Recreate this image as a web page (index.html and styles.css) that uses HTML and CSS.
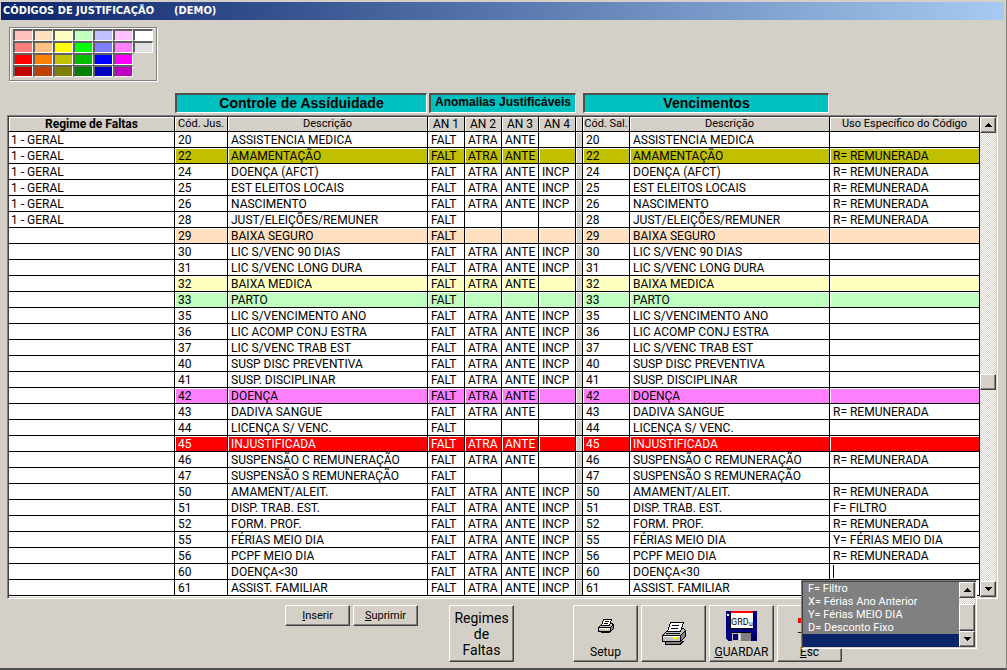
FILE: index.html
```html
<!DOCTYPE html>
<html lang="pt">
<head>
<meta charset="utf-8">
<title>Códigos de Justificação</title>
<link rel="stylesheet" href="styles.css">
</head>
<body>
<main class="window">
<h1 class="titlebar"><span>CÓDIGOS DE JUSTIFICAÇÃO</span><span>(DEMO)</span></h1>

<div class="palette" role="group" aria-label="Cores">
<button class="sw c1" aria-label="Rosa claro"></button><button class="sw c2" aria-label="Pêssego"></button><button class="sw c3" aria-label="Creme"></button><button class="sw c4" aria-label="Verde claro"></button><button class="sw c5" aria-label="Azul claro"></button><button class="sw c6" aria-label="Lilás claro"></button><button class="sw c7" aria-label="Branco"></button>
<button class="sw c8" aria-label="Salmão"></button><button class="sw c9" aria-label="Laranja claro"></button><button class="sw c10" aria-label="Amarelo"></button><button class="sw c11" aria-label="Verde"></button><button class="sw c12" aria-label="Azul médio"></button><button class="sw c13" aria-label="Lilás"></button><button class="sw c14" aria-label="Cinza"></button>
<button class="sw c15 first" aria-label="Vermelho"></button><button class="sw c16" aria-label="Laranja"></button><button class="sw c17" aria-label="Mostarda"></button><button class="sw c18" aria-label="Verde médio"></button><button class="sw c19" aria-label="Azul"></button><button class="sw c20" aria-label="Magenta"></button>
<button class="sw c21 first" aria-label="Vermelho escuro"></button><button class="sw c22" aria-label="Castanho"></button><button class="sw c23" aria-label="Oliva"></button><button class="sw c24" aria-label="Verde escuro"></button><button class="sw c25" aria-label="Azul escuro"></button><button class="sw c26" aria-label="Púrpura"></button>
</div>

<div class="groups">
<h2 class="group attendance">Controle de Assíduidade</h2>
<h2 class="group anomalies">Anomalias Justificáveis</h2>
<h2 class="group salary">Vencimentos</h2>
</div>

<div class="grid">
<table class="codes">
<colgroup><col class="w-regime"><col class="w-code"><col><col class="w-an"><col class="w-an"><col class="w-an"><col class="w-an"><col class="w-gap"><col class="w-sal"><col><col class="w-use"></colgroup>
<thead>
<tr><th class="strong">Regime de Faltas<th>Cód. Jus.<th>Descrição<th class="an">AN 1<th class="an">AN 2<th class="an">AN 3<th class="an">AN 4<th><th>Cód. Sal.<th>Descrição<th>Uso Específico do Código
</thead>
<tbody>
<tr><td>1 - GERAL<td>20<td>ASSISTENCIA MEDICA<td>FALT<td>ATRA<td>ANTE<td><td><td>20<td>ASSISTENCIA MEDICA<td>
<tr class="olive"><td>1 - GERAL<td>22<td>AMAMENTAÇÃO<td>FALT<td>ATRA<td>ANTE<td><td><td>22<td>AMAMENTAÇÃO<td>R= REMUNERADA
<tr><td>1 - GERAL<td>24<td>DOENÇA (AFCT)<td>FALT<td>ATRA<td>ANTE<td>INCP<td><td>24<td>DOENÇA (AFCT)<td>R= REMUNERADA
<tr><td>1 - GERAL<td>25<td>EST ELEITOS LOCAIS<td>FALT<td>ATRA<td>ANTE<td>INCP<td><td>25<td>EST ELEITOS LOCAIS<td>R= REMUNERADA
<tr><td>1 - GERAL<td>26<td>NASCIMENTO<td>FALT<td>ATRA<td>ANTE<td>INCP<td><td>26<td>NASCIMENTO<td>R= REMUNERADA
<tr><td>1 - GERAL<td>28<td>JUST/ELEIÇÕES/REMUNER<td>FALT<td><td><td><td><td>28<td>JUST/ELEIÇÕES/REMUNER<td>R= REMUNERADA
<tr class="peach"><td><td>29<td>BAIXA SEGURO<td>FALT<td><td><td><td><td>29<td>BAIXA SEGURO<td>
<tr><td><td>30<td>LIC S/VENC 90 DIAS<td>FALT<td>ATRA<td>ANTE<td>INCP<td><td>30<td>LIC S/VENC 90 DIAS<td>
<tr><td><td>31<td>LIC S/VENC LONG DURA<td>FALT<td>ATRA<td>ANTE<td>INCP<td><td>31<td>LIC S/VENC LONG DURA<td>
<tr class="cream"><td><td>32<td>BAIXA MEDICA<td>FALT<td>ATRA<td>ANTE<td><td><td>32<td>BAIXA MEDICA<td>
<tr class="mint"><td><td>33<td>PARTO<td>FALT<td><td><td><td><td>33<td>PARTO<td>
<tr><td><td>35<td>LIC S/VENCIMENTO ANO<td>FALT<td>ATRA<td>ANTE<td>INCP<td><td>35<td>LIC S/VENCIMENTO ANO<td>
<tr><td><td>36<td>LIC ACOMP CONJ ESTRA<td>FALT<td>ATRA<td>ANTE<td>INCP<td><td>36<td>LIC ACOMP CONJ ESTRA<td>
<tr><td><td>37<td>LIC S/VENC TRAB EST<td>FALT<td>ATRA<td>ANTE<td>INCP<td><td>37<td>LIC S/VENC TRAB EST<td>
<tr><td><td>40<td>SUSP DISC PREVENTIVA<td>FALT<td>ATRA<td>ANTE<td>INCP<td><td>40<td>SUSP DISC PREVENTIVA<td>
<tr><td><td>41<td>SUSP. DISCIPLINAR<td>FALT<td>ATRA<td>ANTE<td>INCP<td><td>41<td>SUSP. DISCIPLINAR<td>
<tr class="pink"><td><td>42<td>DOENÇA<td>FALT<td>ATRA<td>ANTE<td><td><td>42<td>DOENÇA<td>
<tr><td><td>43<td>DADIVA SANGUE<td>FALT<td>ATRA<td>ANTE<td><td><td>43<td>DADIVA SANGUE<td>R= REMUNERADA
<tr><td><td>44<td>LICENÇA S/ VENC.<td>FALT<td><td><td><td><td>44<td>LICENÇA S/ VENC.<td>
<tr class="red"><td><td>45<td>INJUSTIFICADA<td>FALT<td>ATRA<td>ANTE<td><td><td>45<td>INJUSTIFICADA<td>
<tr><td><td>46<td>SUSPENSÃO C REMUNERAÇÃO<td>FALT<td>ATRA<td>ANTE<td><td><td>46<td>SUSPENSÃO C REMUNERAÇÃO<td>R= REMUNERADA
<tr><td><td>47<td>SUSPENSÃO S REMUNERAÇÃO<td>FALT<td><td><td><td><td>47<td>SUSPENSÃO S REMUNERAÇÃO<td>
<tr><td><td>50<td>AMAMENT/ALEIT.<td>FALT<td>ATRA<td>ANTE<td>INCP<td><td>50<td>AMAMENT/ALEIT.<td>R= REMUNERADA
<tr><td><td>51<td>DISP. TRAB. EST.<td>FALT<td>ATRA<td>ANTE<td>INCP<td><td>51<td>DISP. TRAB. EST.<td>F= FILTRO
<tr><td><td>52<td>FORM. PROF.<td>FALT<td>ATRA<td>ANTE<td>INCP<td><td>52<td>FORM. PROF.<td>R= REMUNERADA
<tr><td><td>55<td>FÉRIAS MEIO DIA<td>FALT<td>ATRA<td>ANTE<td>INCP<td><td>55<td>FÉRIAS MEIO DIA<td>Y= FÉRIAS MEIO DIA
<tr><td><td>56<td>PCPF MEIO DIA<td>FALT<td>ATRA<td>ANTE<td>INCP<td><td>56<td>PCPF MEIO DIA<td>R= REMUNERADA
<tr><td><td>60<td>DOENÇA&lt;30<td>FALT<td>ATRA<td>ANTE<td>INCP<td><td>60<td>DOENÇA&lt;30<td class="editing"><input class="cell-input" type="text" aria-label="Uso específico do código 60">
<div class="popup">
<select class="uses" size="5" aria-label="Usos disponíveis"><option>F= Filtro</option><option>X= Férias Ano Anterior</option><option>Y= Férias MEIO DIA</option><option>D= Desconto Fixo</option><option selected label=" "></option></select>
<div class="scroll">
<button class="arrow" aria-label="Subir"><svg width="7" height="4" viewBox="0 0 7 4"><path d="M3 0h1v1h1v1h1v1h1v1H0V3h1V2h1V1h1z"/></svg></button>
<div class="track list-track"><div class="thumb"></div></div>
<button class="arrow" aria-label="Descer"><svg width="7" height="4" viewBox="0 0 7 4"><path d="M0 0h7v1H6v1H5v1H4v1H3V3H2V2H1V1H0z"/></svg></button>
</div>
</div>
<tr><td><td>61<td>ASSIST. FAMILIAR<td>FALT<td>ATRA<td>ANTE<td>INCP<td><td>61<td>ASSIST. FAMILIAR<td>
</tbody>
</table>
<div class="scroll">
<button class="arrow" aria-label="Subir"><svg width="7" height="4" viewBox="0 0 7 4"><path d="M3 0h1v1h1v1h1v1h1v1H0V3h1V2h1V1h1z"/></svg></button>
<div class="track main-track"><div class="thumb"></div></div>
<button class="arrow" aria-label="Descer"><svg width="7" height="4" viewBox="0 0 7 4"><path d="M0 0h7v1H6v1H5v1H4v1H3V3H2V2H1V1H0z"/></svg></button>
</div>
</div>

<div class="actions">
<div class="edit">
<button class="btn small"><u>I</u>nserir</button>
<button class="btn small"><u>S</u>uprimir</button>
</div>
<button class="btn big regimes">Regimes<br>de<br>Faltas</button>
<div class="tools">
<button class="btn big tool setup">
<svg class="icon" width="16" height="15" viewBox="0 0 16 15" shape-rendering="crispEdges"><path fill="#c0c0c0" stroke="#000" d="M2.5 6.5l-2 2v4h12l3-3v-4l-2-1z"/><path fill="#808080" stroke="#000" d="M12.5 8.5l3-3v4l-3 3z"/><path fill="#fff" d="M1 9h11v1H1z"/><path fill="none" stroke="#000" d="M.5 8.5h12M2.5 13.5h9l2-2"/><path fill="#fff" stroke="#000" d="M5.5.5h8l-2 6h-8z"/><path fill="none" stroke="#000" d="M7 2.5h4M6 4.5h4"/><path fill="#ff0" d="M7 10h3v1H7z"/></svg>
<span>Setup</span></button>
<button class="btn big" aria-label="Imprimir">
<svg class="icon" width="24" height="23" viewBox="0 0 24 23" shape-rendering="crispEdges"><path fill="#808080" stroke="#000" d="M3.5 19v3h15l3-3"/><path fill="#c0c0c0" stroke="#000" d="M4.5 9.5l-4 4v6h18l5-5v-6l-2-2z"/><path fill="#808080" stroke="#000" d="M18.5 13.5l5-5v6l-5 5z"/><path fill="#fff" d="M1 14h17v1H1z"/><path fill="none" stroke="#000" d="M.5 13.5h18M4 11.5h14"/><path fill="#fff" stroke="#000" d="M8.5.5h13l-3 9h-13z"/><path fill="none" stroke="#000" d="M10 3.5h7M9 6.5h7"/><path fill="#ff0" d="M11 15h4v2h-4z"/></svg></button>
<button class="btn big tool">
<svg class="icon" width="31" height="30" viewBox="0 0 31 30" shape-rendering="crispEdges"><path fill="#000080" d="M0 0h31v30H2l-2-2z"/><path fill="#000" d="M4 2h24v16H4zM6 21h20v1H6z"/><path fill="#fff" d="M5 2h22v15H5zM1 3h2v2H1z"/><path fill="red" d="M5 0h22v2H5z"/><path fill="#808080" d="M6 22h19v8H6z"/><path fill="#c0c0c0" d="M6 22h9v8H6z"/><path fill="#000080" d="M7 23h5v6H7z"/><path fill="#fff" d="M13 23h1v6h-1z"/><path fill="#000" d="M28 26h1v1h1v1h-1v1h-1v-1h-1v-1h1z"/><text class="disk-text" x="5" y="14">GRD</text><text class="disk-sub" x="23" y="15">u</text></svg>
<span><u>G</u>UARDAR</span></button>
<button class="btn big tool">
<svg class="icon" width="24" height="30" viewBox="0 0 24 30" shape-rendering="crispEdges"><path fill="red" d="M0 7h24v5H0z"/><path fill="#000" d="M0 21h24v1H0z"/></svg>
<span><u>E</u>sc</span></button>
</div>
</div>
</main>
</body>
</html>
```
FILE: styles.css
```css
* { box-sizing: border-box; }
body {
  margin: 0;
  background: #d4d0c8;
  color: #000;
  font: 12px/14px Roboto, "Liberation Sans", sans-serif;
}
button, input, select { font: inherit; color: inherit; border-radius: 0; margin: 0; }
.window {
  min-height: 100vh;
  padding: 2px 0 0 1px;
  border-right: 1px solid #808080;
  border-bottom: 2px solid #505050;
}
.titlebar {
  display: flex;
  gap: 20px;
  margin: 0 2px 0 0;
  padding: 0 2px;
  background: linear-gradient(90deg, #0a246a, #a6caf0);
  color: #fff;
  font: bold 11px/18px "DejaVu Sans Condensed", "DejaVu Sans", sans-serif;
}

/* Colour palette */
.palette {
  display: grid;
  grid-template-columns: repeat(7, 20px);
  grid-auto-rows: 12px;
  width: max-content;
  margin: 7px 0 12px 8px;
  padding: 1px 3px 3px;
  border: 1px solid #808080;
  box-shadow: inset 1px 1px #fff, 1px 1px #fff;
}
.sw {
  padding: 0;
  border: solid;
  border-width: 2px 1px 1px 2px;
  border-color: #606060 #fff #fff #606060;
}
.first { grid-column: 1; }
.c1 { background: #ffc0c0; } .c2 { background: #ffe0c0; } .c3 { background: #ffffc0; }
.c4 { background: #c0ffc0; } .c5 { background: #c0c0ff; } .c6 { background: #ffc0ff; }
.c7 { background: #fff; } .c8 { background: #ff8080; } .c9 { background: #ffc080; }
.c10 { background: #ff0; } .c11 { background: #0f0; } .c12 { background: #8080ff; }
.c13 { background: #ff80ff; } .c14 { background: #e0e0e0; } .c15 { background: #f00; }
.c16 { background: #ff8000; } .c17 { background: #c0c000; } .c18 { background: #00c000; }
.c19 { background: #00f; } .c20 { background: #f0f; } .c21 { background: #c00000; }
.c22 { background: #c04000; } .c23 { background: #808000; } .c24 { background: #008000; }
.c25 { background: #0000c0; } .c26 { background: #c000c0; }

/* Group headings share the table's column widths */
.groups {
  display: grid;
  grid-template-columns: 166px 53px 1fr 148px 7px 47px 1fr 150px;
  padding: 0 26px 0 8px;
}
.group {
  height: 20px;
  margin: 0 1px 0 0;
  border: solid;
  border-width: 2px 1px 1px 2px;
  border-color: #505050 #fff #fff #505050;
  background: #00c0c0;
  font: bold 14px/17px "Liberation Sans", sans-serif;
  text-align: center;
  white-space: nowrap;
}
.attendance { grid-column: 2 / 4; }
.anomalies { grid-column: 4; font-size: 12px; line-height: 15px; margin: 0 0 0 1px; }
.salary { grid-column: 6 / 8; }

.grid {
  display: flex;
  margin: 2px 8px 6px 6px;
  padding: 1px;
  border: 1px solid;
  border-color: #808080 #fff #fff #808080;
  box-shadow: inset 1px 1px #404040;
}
.codes {
  flex: 1;
  table-layout: fixed;
  width: 100%;
  border-spacing: 0;
  padding-bottom: 1px;
  background: #fff;
}
.w-regime { width: 166px; }
.w-code { width: 53px; }
.w-an { width: 37px; }
.w-gap { width: 7px; }
.w-sal { width: 47px; }
.w-use { width: 150px; }
.codes th, .codes td {
  padding: 2px 0 0 3px;
  height: 16px;
  border: solid #000;
  border-width: 0 1px 1px 0;
  box-shadow: inset 1px 1px #fff;
  text-align: left;
  white-space: nowrap;
  font-weight: normal;
  line-height: 13px;
}
.codes th { height: 15px; padding: 0; font-size: 11px; line-height: 14px; background: #d4d0c8; text-align: center; }
.codes .strong { font-size: 12px; font-weight: bold; }
.codes .an { font-size: 12px; }
.codes td:nth-child(8) { background: #d4d0c8; padding: 0; }
.codes td:first-child { background: #fff; color: #000; padding-left: 2px; }
.olive { background: #c0c000; }
.peach { background: #ffe0c0; }
.cream { background: #ffffc0; }
.mint { background: #c0ffc0; }
.pink { background: #ff80ff; }
.red { background: #f00; color: #fff; }
.codes .editing { position: relative; padding: 0; }
.cell-input {
  display: block;
  width: 100%;
  height: 15px;
  padding: 0 3px;
  border: 0;
  outline: 0;
  background: linear-gradient(#000, #000) 3px 1px / 1px 13px no-repeat;
}

/* Scroll bars */
.scroll { display: flex; flex-direction: column; width: 16px; background: #d4d0c8; }
.arrow, .thumb {
  border: 1px solid;
  border-color: #fff #404040 #404040 #fff;
  box-shadow: inset -1px -1px #808080;
  background: #d4d0c8;
}
.arrow { display: grid; place-content: center; height: 16px; padding: 0; }
.track {
  flex: 1;
  display: flex;
  flex-direction: column;
  background: repeating-conic-gradient(#fff 0 25%, #d4d0c8 0 50%) 0 0 / 2px 2px;
}
.thumb { height: 16px; }
.main-track::before { content: ""; flex: 241; }
.main-track::after { content: ""; flex: 191; }
.list-track { justify-content: flex-end; }
.list-track .thumb { height: 27px; }

.popup {
  position: absolute;
  z-index: 2;
  top: 16px;
  left: -29px;
  display: flex;
  width: 176px;
  padding: 1px;
  border: 1px solid;
  border-color: #808080 #fff #fff #808080;
  box-shadow: inset 1px 1px #404040;
  background: #d4d0c8;
  color: #fff;
  font-size: 11px;
}
.uses { flex: 1; min-width: 0; height: 65px; padding: 0; border: 0; outline: 0; background: #808080; overflow: hidden; }
.uses option { height: 13px; min-height: 13px; padding: 0 0 0 5px; line-height: 13px; color: #fff; }
.uses option:checked { background: #0a246a linear-gradient(#0a246a, #0a246a); }

/* Action buttons */
.actions { display: flex; align-items: flex-start; padding: 0 164px 0 284px; }
.edit { display: flex; gap: 3px; margin-right: 31px; }
.btn {
  padding: 0;
  border: 1px solid;
  border-color: #fff #404040 #404040 #fff;
  box-shadow: inset -1px -1px #808080;
  background: #d4d0c8;
  text-align: center;
}
.small { width: 65px; height: 21px; font-size: 11px; }
.big { width: 65px; height: 57px; }
.regimes { font-size: 14px; line-height: 16px; }
.tools { display: flex; gap: 3px; margin-left: auto; }
.icon { display: block; margin: 0 auto; }
.tool { display: flex; flex-direction: column; justify-content: flex-end; align-items: center; gap: 4px; padding-bottom: 2px; }
.setup { gap: 11px; }
.disk-text { font: 9px Roboto, sans-serif; }
.disk-sub { font: 7px Roboto, sans-serif; }
```
